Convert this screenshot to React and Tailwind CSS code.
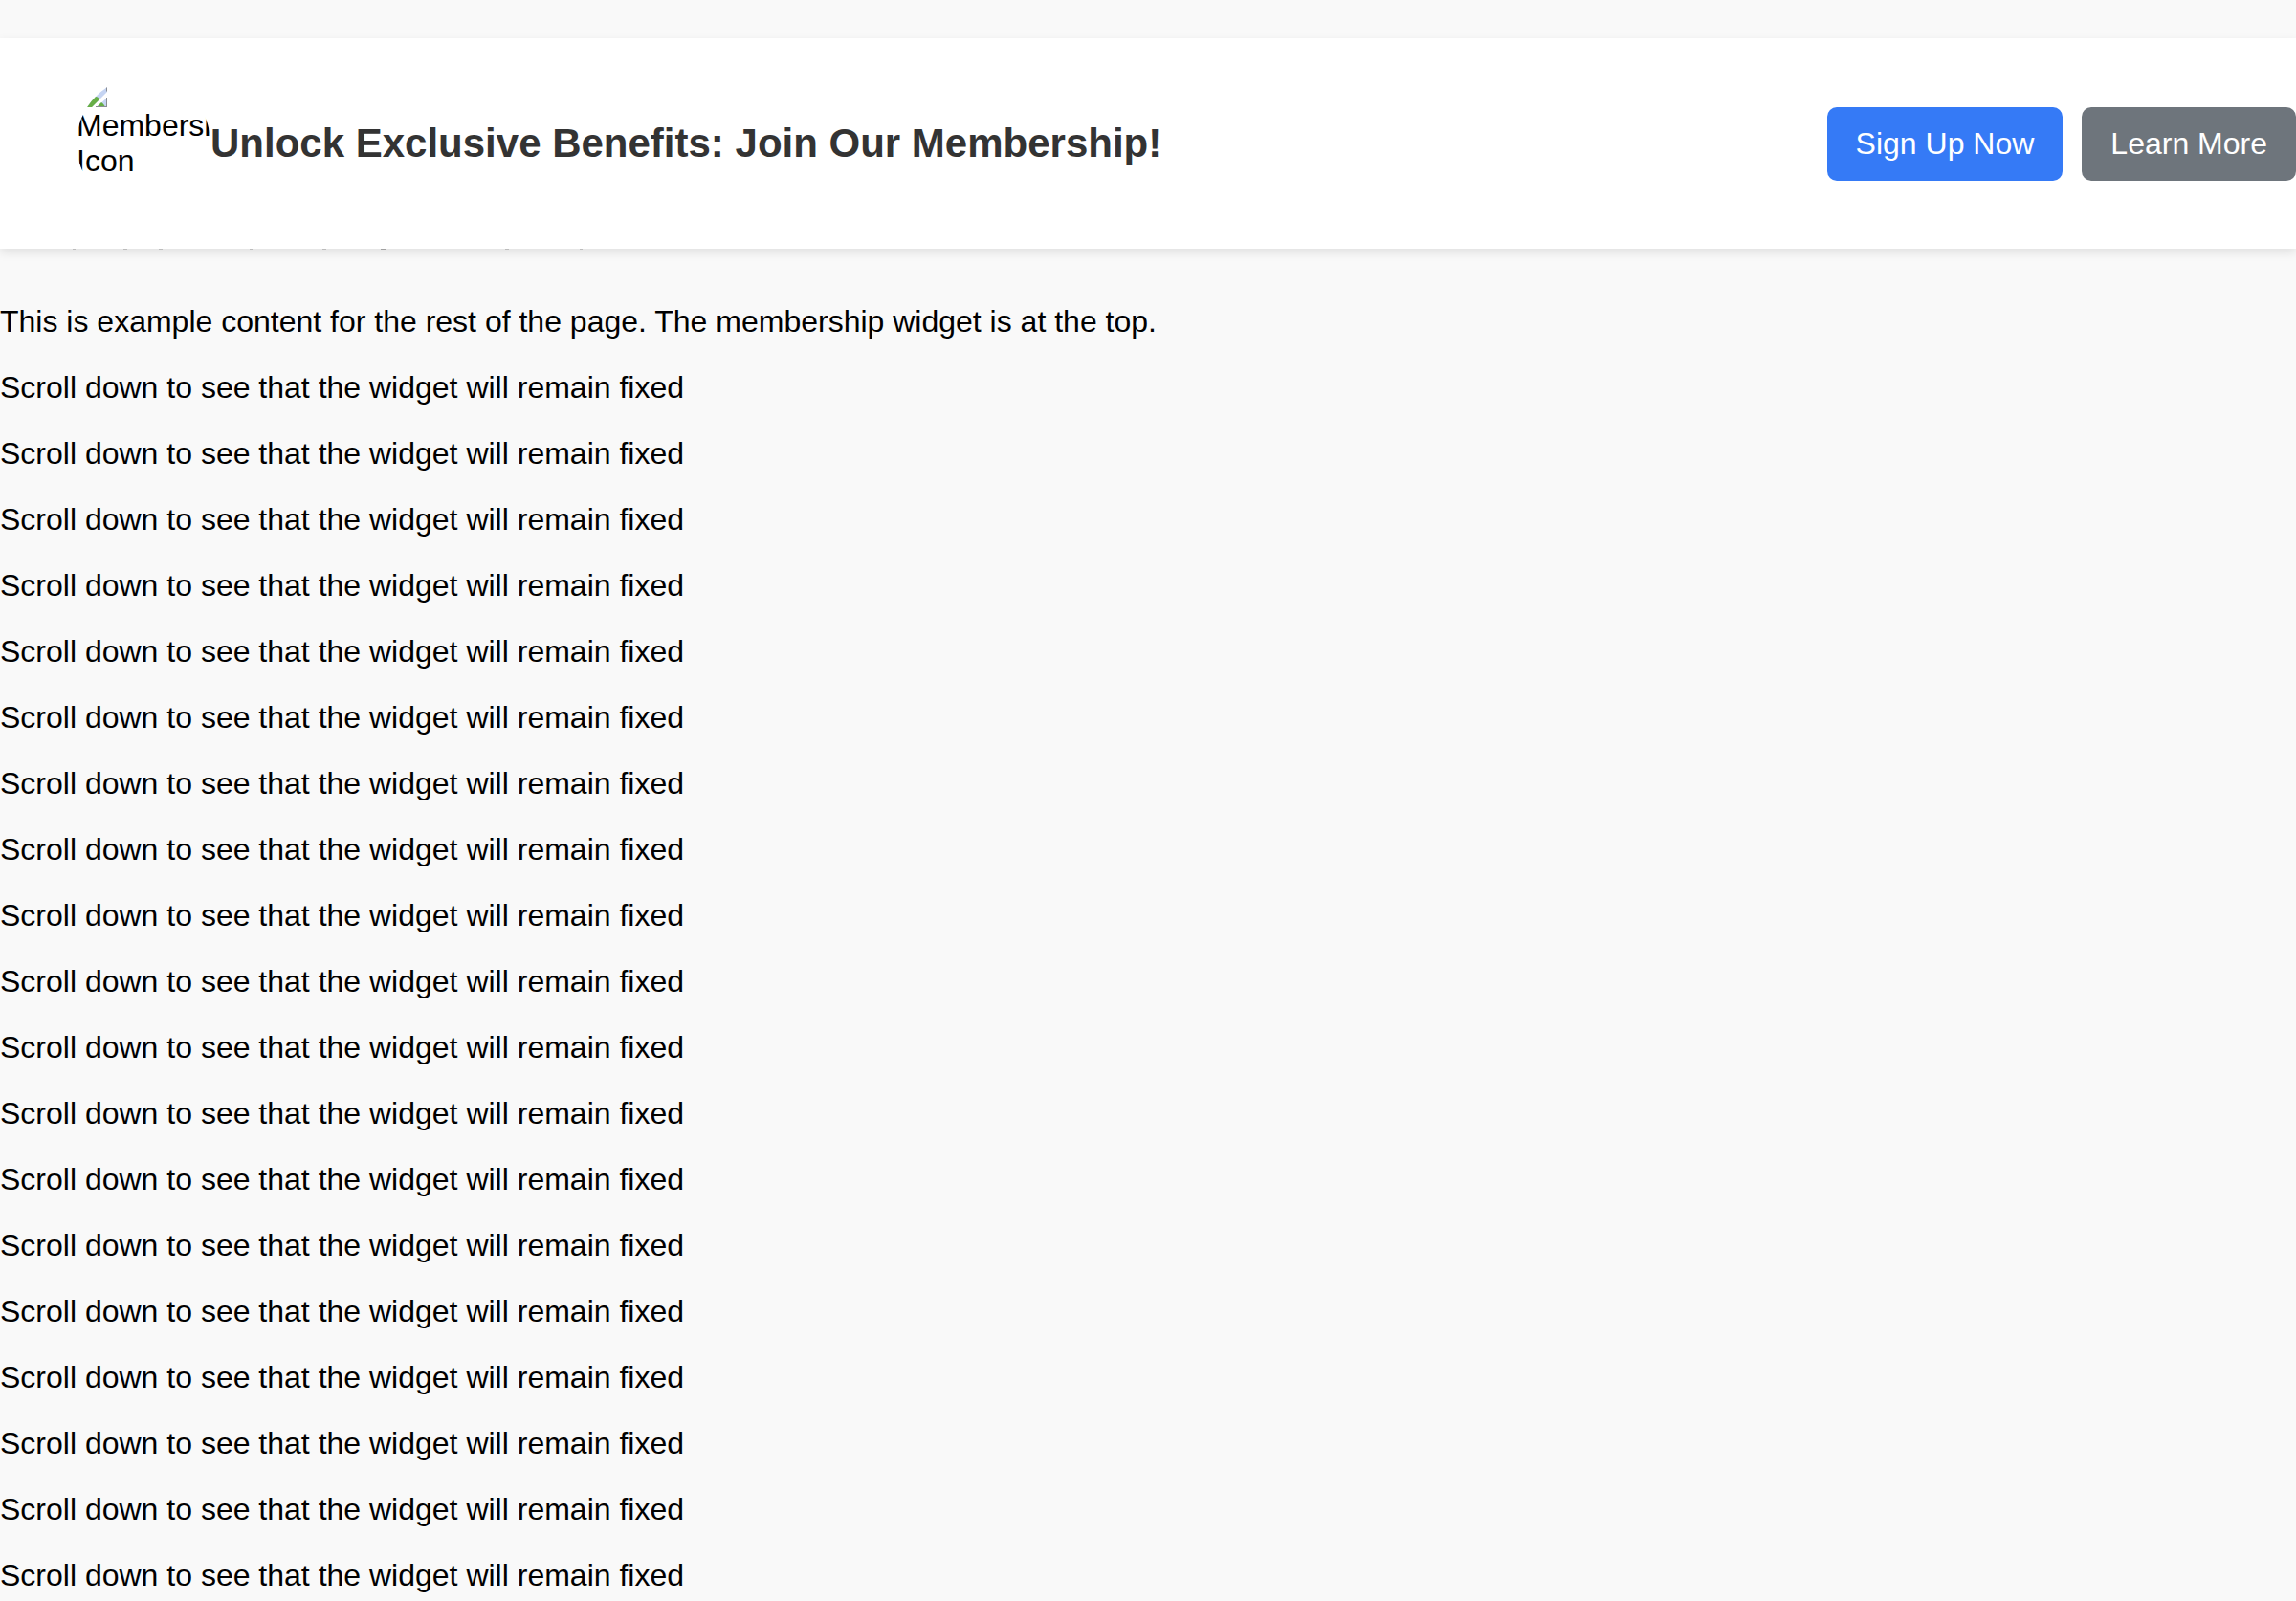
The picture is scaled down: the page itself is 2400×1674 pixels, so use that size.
const lines = Array.from({ length: 19 }, (_, i) => i);

function BrokenImage() {
  return (
    <svg viewBox="0 0 32 32" className="block size-8 shrink-0" aria-hidden="true">
      <path d="M0 0 H32 V16 L16 32 H0 Z" fill="#c5d4f2" />
      <path d="M4 32 C12 22 17 20 20 21 C22 21 23 22 24 24 L16 32 Z" fill="#67ae46" />
      <path d="M31 0 H32 V15 L31 16 Z" fill="#8a8d93" />
      <path d="M32 22 V32 H21 Z" fill="#c5d4f2" />
      <path d="M21 32 L26 27 C28 28 29 30 30 32 Z" fill="#67ae46" />
      <path d="M31 22 H32 V32 H20 V31 H31 Z" fill="#8a8d93" />
    </svg>
  );
}

/* Lower tips of a line that is tucked under the header. */
function HiddenLine() {
  return (
    <svg className="block h-px w-full" aria-hidden="true">
      <path d="M76 0h3v1h-3z M129 0h4v1h-4z M166 0h4v1h-4z M261 0h3v1h-3z M337 0h4v1h-4z M528 0h4v1h-4z M606 0h3v1h-3z" fill="#000" fillOpacity="0.18" />
      <path d="M398 0h6v1h-6z" fill="#000" fillOpacity="0.3" />
    </svg>
  );
}

export default function App() {
  return (
    <div className="min-h-screen bg-[#f9f9f9] pt-10 font-['Liberation_Sans',Arial,sans-serif] text-[32px] leading-[37px] text-black">
      <header className="relative flex h-[220px] items-center justify-between bg-white pl-20 shadow-[0_4px_10px_rgba(0,0,0,0.1)]">
        <div className="flex items-center">
          <div className="size-[140px] shrink-0 overflow-hidden rounded-full">
            <BrokenImage />
            <div className="pt-px">Membership Icon</div>
          </div>
          <h1 className="text-[42px] leading-[48px] font-bold text-[#333333]">
            Unlock Exclusive Benefits: Join Our Membership!
          </h1>
        </div>
        <div className="flex gap-5">
          <button type="button" className="rounded-[10px] bg-[#357af6] px-[30px] py-5 text-white">Sign Up Now</button>
          <button type="button" className="rounded-[10px] bg-[#6e757c] px-[30px] py-5 text-white">Learn More</button>
        </div>
      </header>
      <HiddenLine />
      <main className="flex flex-col gap-8 pt-[57px]">
        <p>This is example content for the rest of the page. The membership widget is at the top.</p>
        {lines.map((line) => (
          <p key={line}>Scroll down to see that the widget will remain fixed</p>
        ))}
      </main>
    </div>
  );
}
